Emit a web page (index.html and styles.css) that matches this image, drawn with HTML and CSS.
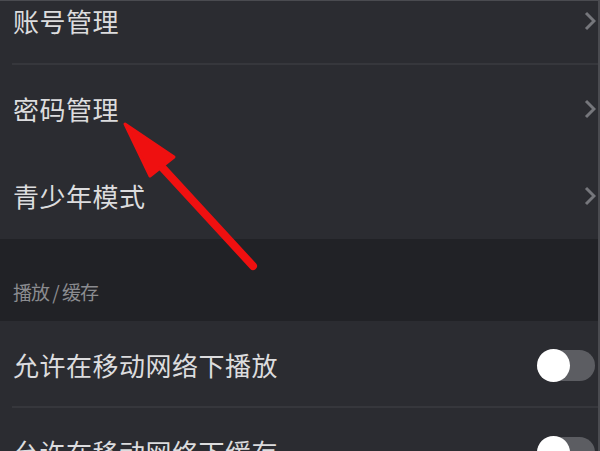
FILE: index.html
```html
<!DOCTYPE html>
<html lang="zh-CN">
<head>
<meta charset="utf-8">
<link rel="stylesheet" href="styles.css">
</head>
<body>
<div class="screen">
  <div class="group first">
    <div class="row sep">
      <span class="label">账号管理</span>
      <svg class="chev" viewBox="0 0 12 20"><polyline points="2,2 10,10 2,18"/></svg>
    </div>
    <div class="row">
      <span class="label">密码管理</span>
      <svg class="chev" viewBox="0 0 12 20"><polyline points="2,2 10,10 2,18"/></svg>
    </div>
    <div class="row">
      <span class="label">青少年模式</span>
      <svg class="chev" viewBox="0 0 12 20"><polyline points="2,2 10,10 2,18"/></svg>
    </div>
  </div>
  <div class="section">播放 / 缓存</div>
  <div class="group">
    <div class="row sep">
      <span class="label">允许在移动网络下播放</span>
      <span class="toggle"><span class="knob"></span></span>
    </div>
    <div class="row">
      <span class="label">允许在移动网络下缓存</span>
      <span class="toggle"><span class="knob"></span></span>
    </div>
  </div>
  <svg class="arrow" viewBox="0 0 600 451" width="600" height="451">
    <line x1="253" y1="266" x2="148" y2="152" stroke="#ef1010" stroke-width="8" stroke-linecap="round"/>
    <polygon points="125,124 174,157 150,176" fill="#ef1010" stroke="#ef1010" stroke-width="3" stroke-linejoin="round"/>
  </svg>
</div>
</body>
</html>
```

FILE: styles.css
```css
* { box-sizing: border-box; }
html, body { margin: 0; padding: 0; background: #2b2c31; }
body {
  font-family: "Noto Sans CJK SC", "Noto Sans", sans-serif;
}
.screen {
  position: relative;
  width: 600px;
  height: 451px;
  overflow: hidden;
  background: #2b2c31;
  border-top: 1px solid #4a4b50;
  border-right: 2px solid #4a4b50;
}
.group { display: flex; flex-direction: column; }
.group.first { margin-top: -24px; }
.row {
  height: 87px;
  display: flex;
  align-items: center;
  justify-content: space-between;
  padding-left: 13px;
  padding-right: 2px;
  position: relative;
}
.group.first .row:first-child { height: 88px; }
.row.sep::after {
  content: "";
  position: absolute;
  left: 12px;
  right: 0;
  bottom: 0;
  height: 2px;
  background: #36373c;
}
.label {
  color: #dcdcde;
  font-size: 26px;
  letter-spacing: 0.5px;
  line-height: 1;
}
.chev {
  width: 12px;
  height: 20px;
  fill: none;
  stroke: #76777c;
  stroke-width: 3;
}
.section {
  height: 82px;
  background: #212226;
  color: #8b8c90;
  font-size: 19px;
  padding-left: 13px;
  display: flex;
  align-items: flex-end;
  padding-bottom: 16px;
  letter-spacing: -1px;
}
.toggle {
  width: 58px;
  height: 31px;
  border-radius: 16px;
  background: #5c5d62;
  position: relative;
  margin-right: 1px;
  margin-top: 1px;
}
.knob {
  position: absolute;
  left: 0;
  top: -1px;
  width: 33px;
  height: 33px;
  border-radius: 50%;
  background: #ffffff;
}
.arrow {
  position: absolute;
  left: 0;
  top: -1px;
}
```
